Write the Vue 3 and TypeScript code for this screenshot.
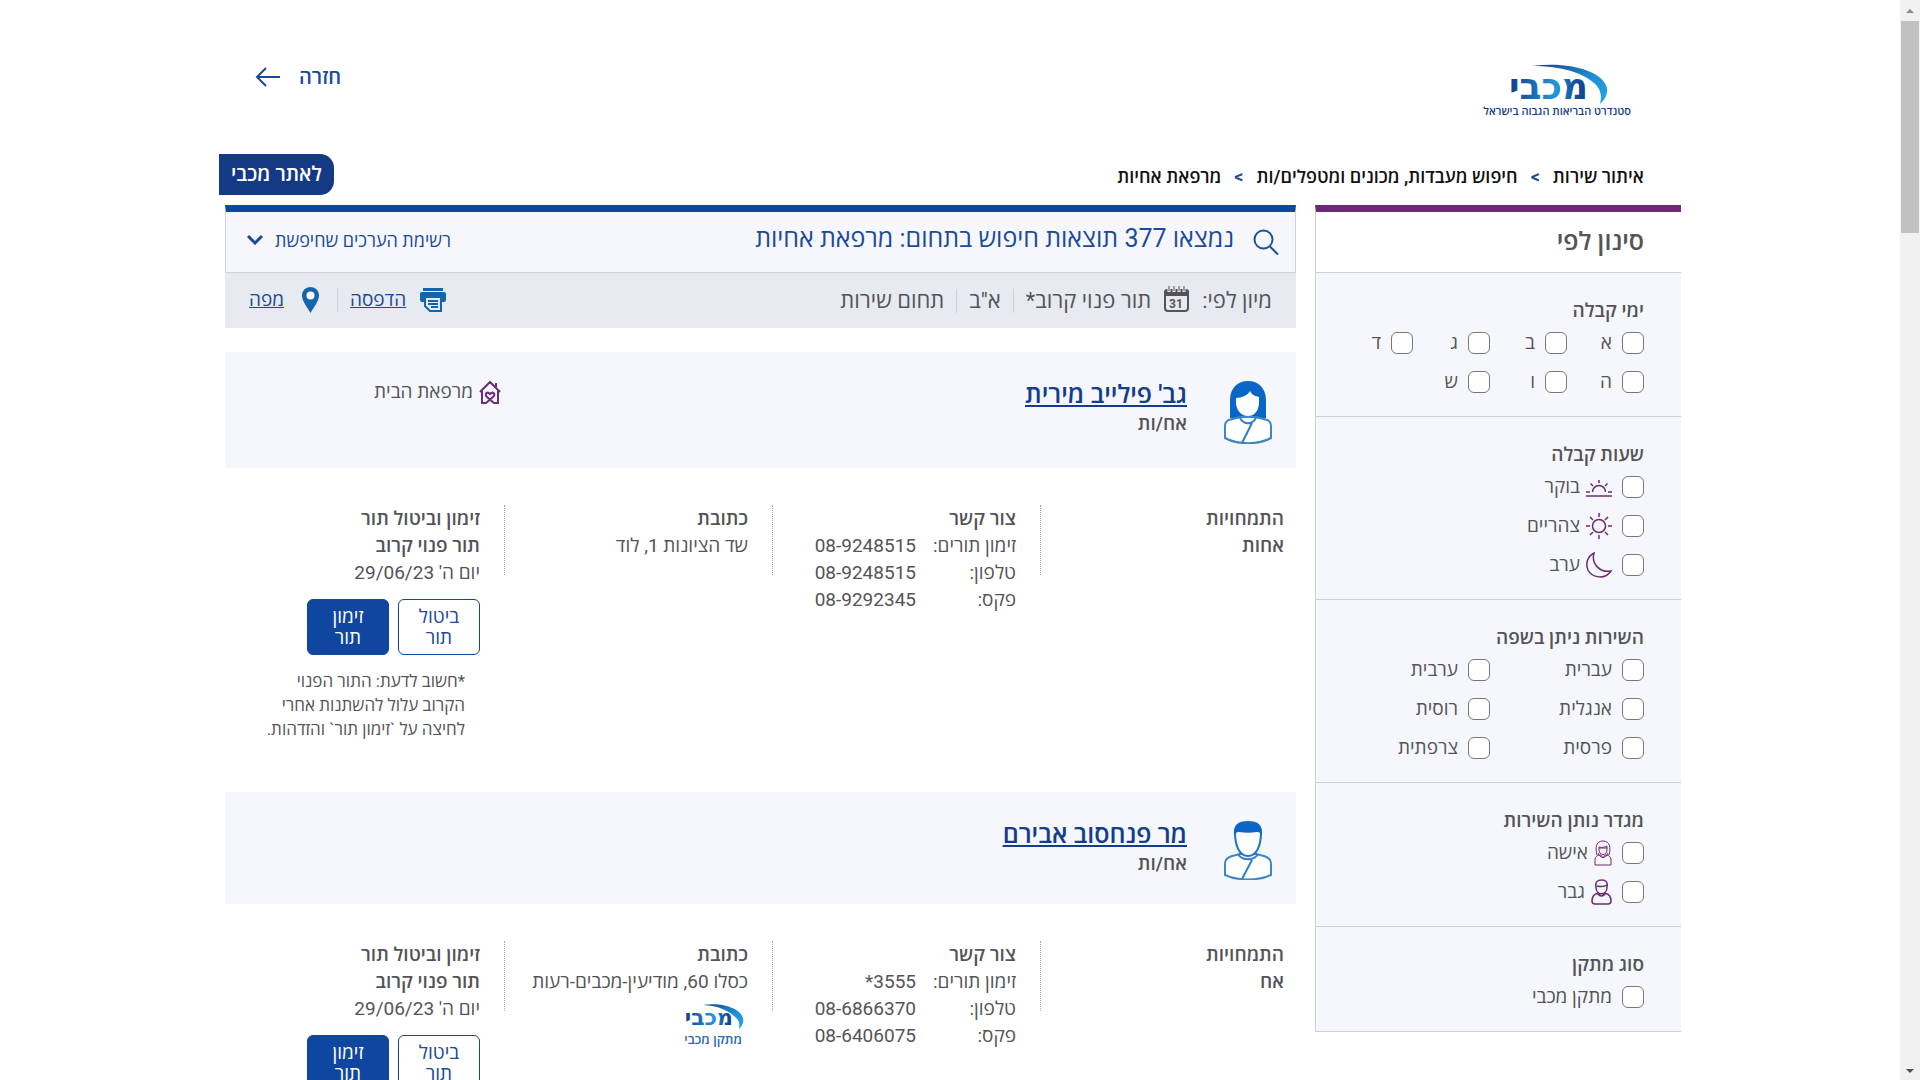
<script setup lang="ts">
interface Option { label: string; icon?: string }
interface Section { title: string; columns: number; options: Option[] }
interface Provider {
  name: string
  gender: 'female' | 'male'
  role: string
  homeClinic: boolean
  specialty: string
  phones: { label: string; value: string }[]
  address: string
  facility: boolean
  date: string
}

const crumbs = ['איתור שירות', 'חיפוש מעבדות, מכונים ומטפלים/ות', 'מרפאת אחיות']

const sections: Section[] = [
  { title: 'ימי קבלה', columns: 4, options: ['א', 'ב', 'ג', 'ד', 'ה', 'ו', 'ש'].map((label) => ({ label })) },
  {
    title: 'שעות קבלה',
    columns: 1,
    options: [
      { label: 'בוקר', icon: 'sunrise' },
      { label: 'צהריים', icon: 'sun' },
      { label: 'ערב', icon: 'moon' },
    ],
  },
  {
    title: 'השירות ניתן בשפה',
    columns: 2,
    options: ['עברית', 'ערבית', 'אנגלית', 'רוסית', 'פרסית', 'צרפתית'].map((label) => ({ label })),
  },
  {
    title: 'מגדר נותן השירות',
    columns: 1,
    options: [
      { label: 'אישה', icon: 'woman' },
      { label: 'גבר', icon: 'man' },
    ],
  },
  { title: 'סוג מתקן', columns: 1, options: [{ label: 'מתקן מכבי' }] },
]

const providers: Provider[] = [
  {
    name: "גב' פילייב מירית",
    gender: 'female',
    role: 'אח/ות',
    homeClinic: true,
    specialty: 'אחות',
    phones: [
      { label: 'זימון תורים:', value: '08-9248515' },
      { label: 'טלפון:', value: '08-9248515' },
      { label: 'פקס:', value: '08-9292345' },
    ],
    address: 'שד הציונות 1, לוד',
    facility: false,
    date: "יום ה' 29/06/23",
  },
  {
    name: 'מר פנחסוב אבירם',
    gender: 'male',
    role: 'אח/ות',
    homeClinic: false,
    specialty: 'אח',
    phones: [
      { label: 'זימון תורים:', value: '3555*' },
      { label: 'טלפון:', value: '08-6866370' },
      { label: 'פקס:', value: '08-6406075' },
    ],
    address: 'כסלו 60, מודיעין-מכבים-רעות',
    facility: true,
    date: "יום ה' 29/06/23",
  },
]
</script>

<template>
  <div class="shell">
    <div class="page" dir="rtl" lang="he">
      <div class="container">
        <header class="top">
          <a href="#" class="logo" aria-label="מכבי">
            <svg width="150" height="56" viewBox="0 0 150 56" direction="rtl">
              <defs>
                <linearGradient id="arc" x1="0" y1="0" x2="1" y2="1">
                  <stop offset="0" stop-color="#1d3f86" />
                  <stop offset="0.55" stop-color="#1b8fd6" />
                  <stop offset="1" stop-color="#25a9e6" />
                </linearGradient>
                <linearGradient id="word" x1="0" y1="0" x2="1" y2="0">
                  <stop offset="0" stop-color="#123e8c" />
                  <stop offset="0.35" stop-color="#1a72bd" />
                  <stop offset="0.6" stop-color="#2596d8" />
                  <stop offset="0.8" stop-color="#1557a3" />
                  <stop offset="1" stop-color="#123e8c" />
                </linearGradient>
              </defs>
              <path d="M50 2C84-3 121 6 125 24c1 6-2 12-7 16 2-8 1-15-6-21C101 9 80 2 50 2z" fill="url(#arc)" />
              <text x="106" y="35" class="logo-word" fill="url(#word)">מכבי</text>
              <text x="149" y="51" class="logo-tag">סטנדרט הבריאות הגבוה בישראל</text>
            </svg>
          </a>
          <a href="#" class="back">
            <span>חזרה</span>
            <svg width="26" height="20" viewBox="0 0 26 20" fill="none" stroke="#1b4a98" stroke-width="2">
              <path d="M25 10H2M11 1L2 10l9 9" />
            </svg>
          </a>
        </header>

        <div class="trail">
          <nav class="crumbs">
            <template v-for="(crumb, i) in crumbs" :key="crumb">
              <span v-if="i > 0" class="sep">&gt;</span>
              <a href="#">{{ crumb }}</a>
            </template>
          </nav>
          <a href="#" class="site-link">לאתר מכבי</a>
        </div>

        <div class="columns">
          <aside class="filters">
            <h2 class="filters-title">סינון לפי</h2>
            <fieldset v-for="section in sections" :key="section.title" class="section">
              <legend>{{ section.title }}</legend>
              <div class="options" :class="'cols-' + section.columns">
                <label v-for="option in section.options" :key="option.label" class="option">
                  <input type="checkbox" />
                  <svg v-if="option.icon === 'sunrise'" class="opt-icon" width="26" height="26" viewBox="0 0 26 26">
                    <path d="M0 22h26M0 18h4M22 18h4M6.500 18a6.500 6.500 0 0 1 13 0M13 6v3M4.500 9.500l2.500 2.500M21.500 9.500L19 12" />
                  </svg>
                  <svg v-else-if="option.icon === 'sun'" class="opt-icon" width="26" height="26" viewBox="0 0 26 26">
                    <circle cx="13" cy="13" r="6.500" />
                    <path d="M13 0v4M13 22v4M0 13h4M22 13h4M4 4l3 3M19 19l3 3M4 22l3-3M19 7l3-3" />
                  </svg>
                  <svg v-else-if="option.icon === 'moon'" class="opt-icon" width="26" height="26" viewBox="0 0 26 26">
                    <path d="M8 1C2 4-1 11 2 18c4 8 17 10 23 1C14 21 5 12 8 1z" />
                  </svg>
                  <svg v-else-if="option.icon === 'woman'" class="opt-icon thin" width="18" height="26" viewBox="0 0 18 26">
                    <path d="M3 15C1 8 2 1 9 1s8 7 6 14M5 7c3 1 6 0 8-1v4c0 6-8 6-8 0zM5 8h8M1 25v-5c0-4 3-5 6-5 1 3 3 3 4 0 3 0 6 1 6 5v5zM4 13c2 6 8 6 10 0" />
                  </svg>
                  <svg v-else-if="option.icon === 'man'" class="opt-icon" width="21" height="26" viewBox="0 0 21 26">
                    <path d="M5 8C4 3 6 1 11 1c4 0 6 2 5 7 0 9-11 9-11 0zM6 7c4 1 7 1 10-1M7 14c-4 1-6 4-6 8 0 2 1 3 3 3h13c2 0 3-1 3-3 0-4-2-7-6-8-1 4-6 4-7 0z" />
                  </svg>
                  <span>{{ option.label }}</span>
                </label>
              </div>
            </fieldset>
          </aside>

          <main class="results">
            <div class="summary">
              <svg class="search" width="26" height="27" viewBox="0 0 26 27" fill="none" stroke="#1b5493" stroke-width="2">
                <circle cx="10.500" cy="10.500" r="9" />
                <path d="M17 17.500l8 8" />
              </svg>
              <h1>נמצאו 377 תוצאות חיפוש בתחום: מרפאת אחיות</h1>
              <button type="button" class="values">
                <span>רשימת הערכים שחיפשת</span>
                <svg width="16" height="10" viewBox="0 0 16 10" fill="none" stroke="#1b4a98" stroke-width="3">
                  <path d="M1 1l7 7 7-7" />
                </svg>
              </button>
            </div>

            <div class="toolbar">
              <div class="sort">
                <span>מיון לפי:</span>
                <svg class="calendar" width="25" height="26" viewBox="0 0 25 26">
                  <rect x="1" y="5" width="23" height="20" rx="3" fill="none" stroke="#545458" stroke-width="2" />
                  <path d="M0 10V6q0-3 3-3h19q3 0 3 3v4z" fill="#545458" />
                  <path d="M5 0v6M10 0v6M15 0v6M20 0v6" stroke="#e7eaf1" stroke-width="3" />
                  <path d="M5 0v5M10 0v5M15 0v5M20 0v5" stroke="#545458" stroke-width="1" />
                  <text x="12" y="22" text-anchor="middle" class="cal-day">31</text>
                </svg>
                <button type="button">תור פנוי קרוב*</button>
                <i class="bar"></i>
                <button type="button">א"ב</button>
                <i class="bar"></i>
                <button type="button">תחום שירות</button>
              </div>
              <div class="tools">
                <a href="#">
                  <svg width="26" height="26" viewBox="0 0 26 26">
                    <path d="M3 1h20v3H3zM2 5h22q2 0 2 2v6q0 2-2 2h-2V9H4v6H2q-2 0-2-2V7q0-2 2-2z" fill="#1464ae" />
                    <path d="M5 10h16v14H10l-5-5zM8 14h10M8 17h10M11 20h7" fill="none" stroke="#1464ae" stroke-width="2" />
                  </svg>
                  <span>הדפסה</span>
                </a>
                <i class="bar"></i>
                <a href="#" class="map">
                  <svg width="17" height="26" viewBox="0 0 17 26">
                    <path d="M8.500 0C3.500 0 0 4 0 8.500 0 14 5 20 8.500 26 12 20 17 14 17 8.500 17 4 13.500 0 8.500 0z" fill="#1464ae" />
                    <circle cx="8.500" cy="8.500" r="4" fill="#fff" />
                  </svg>
                  <span>מפה</span>
                </a>
              </div>
            </div>

            <article v-for="p in providers" :key="p.name" class="card">
              <div class="card-head">
                <svg v-if="p.gender === 'female'" class="avatar" width="48" height="64" viewBox="0 0 48 64">
                  <path d="M6 38V20C6 8 14 1 24 1s18 7 18 19v18l-7 1-5-2H18l-5 2z" fill="#0a66c6" />
                  <path d="M12 18c6 0 12-3 14-7 2 4 5 5 9 6v5c0 8-4 14-11 14S12 30 12 22z" fill="#fff" />
                  <path d="M17 37h14c6 2 16 1 16 9v12c-13 7-33 7-46 0V46c0-8 10-7 16-9z" fill="#fff" stroke="#3d87c6" stroke-width="2" />
                  <path d="M16 38c4 7 12 7 16 0M28 43L18 63" fill="none" stroke="#2f7fc8" stroke-width="2" />
                </svg>
                <svg v-else class="avatar" width="48" height="60" viewBox="0 0 48 60">
                  <path d="M16 34h16c6 2 15 2 15 10v11c-13 6-33 6-46 0V44c0-8 9-8 15-10z" fill="#fff" stroke="#3d87c6" stroke-width="2" />
                  <path d="M11 12c0 13 4 24 13 24s13-11 13-24" fill="#fff" stroke="#1b72c8" stroke-width="2" />
                  <path d="M10 15C9 5 14 1 24 1s15 4 14 14c-1-2-3-3-5-3-6 1-12 1-18 0-2 0-4 1-5 3z" fill="#0a66c6" />
                  <path d="M14 34c4 7 16 7 20 0M28 40L18 59" fill="none" stroke="#2f7fc8" stroke-width="2" />
                </svg>
                <div class="who">
                  <h3><a href="#">{{ p.name }}</a></h3>
                  <p>{{ p.role }}</p>
                </div>
                <div v-if="p.homeClinic" class="home">
                  <svg width="22" height="24" viewBox="0 0 22 24" fill="none" stroke="#6b2c7b" stroke-width="2">
                    <path d="M1 12L11 2l10 10M3 11v12h4l7-6c3-3 0-6-3-3-3-3-6 0-3 3l7 6h4V11M17 7V3" />
                  </svg>
                  <span>מרפאת הבית</span>
                </div>
              </div>

              <div class="details">
                <section>
                  <h4>התמחויות</h4>
                  <p class="strong">{{ p.specialty }}</p>
                </section>
                <section>
                  <h4>צור קשר</h4>
                  <dl>
                    <template v-for="phone in p.phones" :key="phone.label">
                      <dt>{{ phone.label }}</dt>
                      <dd>{{ phone.value }}</dd>
                    </template>
                  </dl>
                </section>
                <section>
                  <h4>כתובת</h4>
                  <p class="address">{{ p.address }}</p>
                  <svg v-if="p.facility" class="facility" width="64" height="44" viewBox="0 0 64 44" direction="rtl">
                    <path d="M22 1C42-2 60 5 62 14c1 5-1 8-4 11 1-6 0-9-5-13C46 6 38 2 22 1z" fill="url(#arc)" />
                    <text x="52" y="21" class="facility-word" fill="url(#word)">מכבי</text>
                    <text x="61" y="40" class="facility-tag">מתקן מכבי</text>
                  </svg>
                </section>
                <section>
                  <h4>זימון וביטול תור</h4>
                  <p class="strong">תור פנוי קרוב</p>
                  <p>{{ p.date }}</p>
                  <div class="actions">
                    <button type="button" class="cancel">ביטול תור</button>
                    <button type="button" class="book">זימון תור</button>
                  </div>
                  <p class="note">*חשוב לדעת: התור הפנוי הקרוב עלול להשתנות אחרי לחיצה על `זימון תור` והזדהות.</p>
                </section>
              </div>
            </article>
          </main>
        </div>
      </div>
    </div>

    <div class="scrollbar" aria-hidden="true">
      <span class="arrow up"></span>
      <span class="thumb"></span>
      <span class="arrow down"></span>
    </div>
  </div>
</template>

<style>
body {
  margin: 0;
  background: #fff;
}
</style>

<style scoped>
.shell {
  display: flex;
  height: 100vh;
  overflow: hidden;
  font-family: Roboto, "Open Sans", "Liberation Sans", sans-serif;
  font-size: 19px;
  line-height: 27px;
  color: #545458;
}
h1, h2, h3, h4, p, dl, dd { margin: 0; }
button {
  font: inherit;
  color: inherit;
  background: none;
  border: 0;
  padding: 0;
  cursor: pointer;
}
a { color: inherit; text-decoration: none; }
svg { display: block; flex: none; }
.page { flex: 1; min-width: 0; }
.container { max-width: 1462px; margin: 0 auto; }

.top {
  display: flex;
  justify-content: space-between;
  align-items: flex-start;
  height: 88px;
  padding: 64px 49px 0 36px;
}
.logo-word { font: 700 36px "DejaVu Sans", sans-serif; }
.logo-tag { font: 600 11px "Open Sans", sans-serif; fill: #173f86; }
.back {
  display: flex;
  align-items: center;
  gap: 18px;
  height: 26px;
  color: #1b4a98;
  font-size: 20px;
  font-weight: 600;
}

.trail { display: flex; justify-content: space-between; height: 53px; }
.crumbs {
  display: flex;
  gap: 13px;
  padding: 12px 37px 0 0;
  color: #111;
  font-size: 18px;
  line-height: 26px;
  font-weight: 600;
}
.sep { color: #1b4a98; }
.site-link {
  display: flex;
  align-items: center;
  height: 41px;
  margin-top: 2px;
  padding: 0 12px;
  border-radius: 0 14px 14px 0;
  background: #143a86;
  color: #fff;
  font-size: 20px;
  font-weight: 600;
}

.columns { display: flex; align-items: flex-start; gap: 19px; padding-left: 6px; }
.filters {
  flex: 0 0 366px;
  border-top: 7px solid #6f2878;
  border-left: 1px solid #d0d0d8;
  box-sizing: border-box;
  background: #f6f7fd;
}
.filters-title {
  height: 60px;
  padding-right: 37px;
  background: #fff;
  border-bottom: 1px solid #d0d0d8;
  font-size: 25px;
  line-height: 60px;
  font-weight: 600;
}
.section {
  min-width: 0;
  margin: 0;
  padding: 26px 37px 15px 0;
  border: 0;
  border-bottom: 1px solid #d0d0d8;
}
.section legend {
  float: right;
  width: 100%;
  padding: 0;
  line-height: 24px;
  font-weight: 600;
}
.options { display: grid; clear: both; }
.cols-4 { grid-template-columns: repeat(4, 77px); }
.cols-2 { grid-template-columns: repeat(2, 154px); }
.option { display: flex; align-items: center; height: 39px; }
.option input {
  appearance: none;
  width: 22px;
  height: 22px;
  margin: 0 0 0 10px;
  border: 1px solid #77777d;
  border-radius: 6px;
  background: #fff;
}
.opt-icon {
  margin-left: 6px;
  fill: none;
  stroke: #6b2c6f;
  stroke-width: 1.5;
}
.thin { stroke-width: 1; }

.results { flex: 1; min-width: 0; }
.summary {
  display: flex;
  align-items: center;
  height: 60px;
  padding: 0 16px 0 21px;
  border: 1px solid #d0d0d8;
  border-top: 7px solid #0f46a0;
  background: #f6f7fd;
  color: #1b4a98;
}
.search { margin-left: 19px; }
.summary h1 { font-size: 25px; line-height: 52px; font-weight: 400; padding-bottom: 6px; }
.values { display: flex; align-items: center; gap: 12px; margin-right: auto; padding-bottom: 4px; font-size: 18px; }
.toolbar {
  display: flex;
  justify-content: space-between;
  align-items: center;
  height: 55px;
  padding: 0 24px;
  background: #e7eaf1;
}
.sort { display: flex; align-items: center; font-size: 22px; }
.calendar { margin: 0 13px 4px; }
.cal-day { font: 700 12px Roboto, sans-serif; fill: #545458; }
.bar { width: 1px; height: 24px; margin: 0 12px; background: #d0d2da; }
.tools { display: flex; align-items: center; padding-bottom: 2px; color: #1b4a98; }
.tools a { display: flex; align-items: center; gap: 14px; }
.tools a span { text-decoration: underline; }
.tools .map { gap: 18px; padding-right: 6px; }

.card { padding-top: 24px; }
.card + .card { padding-top: 51px; }
.card-head {
  display: flex;
  align-items: flex-start;
  padding: 28px 24px 24px;
  background: #f6f7fd;
}
.avatar { margin-left: 37px; }
.who { flex: 1; }
.who h3 { font-size: 25px; line-height: 30px; font-weight: 600; color: #123e8c; }
.who h3 a { text-decoration: underline; }
.who p { font-weight: 600; line-height: 28px; }
.home { display: flex; align-items: center; gap: 6px; flex: 0 0 252px; line-height: 24px; }

.details { display: grid; grid-template-columns: 255fr 268fr 268fr 280fr; padding-top: 37px; }
.details section { position: relative; min-width: 0; padding-right: 25px; }
.details section:first-child { padding-right: 12px; }
.details section + section::before {
  content: "";
  position: absolute;
  top: 0;
  right: 0;
  height: 70px;
  border-right: 1px dotted #a8a8b0;
}
.details h4 { font-size: 19px; font-weight: 600; }
.strong { font-weight: 600; }
.details dl { display: grid; grid-template-columns: 100px 1fr; white-space: nowrap; }
.address { white-space: nowrap; }
.facility { margin: 9px 3px 0 0; }
.facility-word { font: 700 22px "DejaVu Sans", sans-serif; }
.facility-tag { font: 600 13px "Open Sans", sans-serif; fill: #2b6db0; }
.actions { display: flex; gap: 9px; margin-top: 13px; }
.actions button {
  box-sizing: border-box;
  width: 82px;
  height: 56px;
  padding: 0 14px;
  border: 1px solid #0f46a0;
  border-radius: 6px;
  line-height: 21px;
}
.cancel { color: #1b4a98; background: #fff; }
.actions .book { color: #fff; background: #0f46a0; }
.note { width: 206px; padding: 14px 15px 0 0; font-size: 17px; line-height: 24px; }

.scrollbar {
  display: flex;
  flex-direction: column;
  align-items: center;
  flex: 0 0 20px;
  background: #f1f1f1;
}
.thumb { width: 18px; height: 212px; background: #c1c1c1; }
.arrow { width: 0; border: 4px solid transparent; }
.up { margin: 5px 0 8px; border-bottom-color: #8a8a8a; }
.down { margin-top: auto; margin-bottom: 3px; border-top-color: #505050; }
</style>
